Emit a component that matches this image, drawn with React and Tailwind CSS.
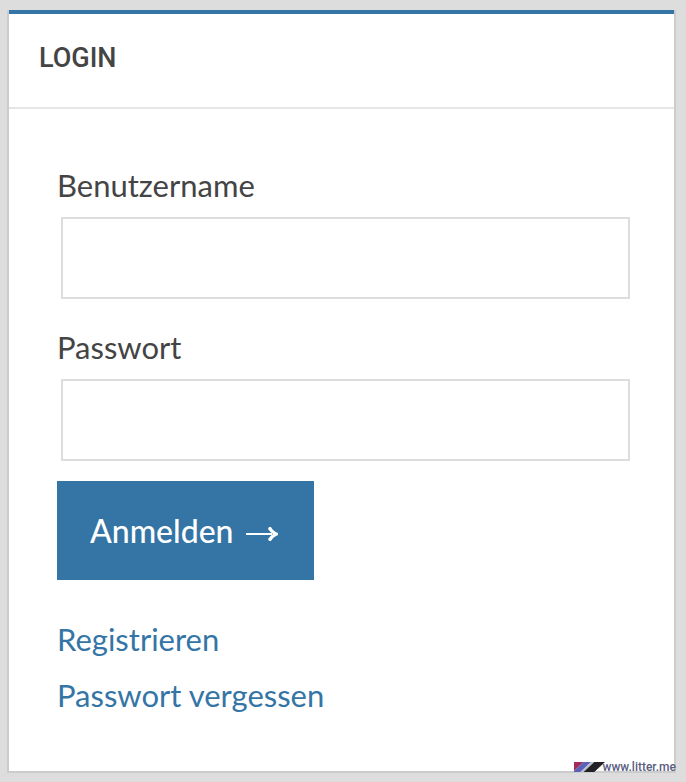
import React, { useState } from 'react';

const Field = ({ id, label, type, value, onChange }) => (
  <div className="mb-5">
    <label htmlFor={id} className="block text-[31px] leading-[56px] text-[#444444]">
      {label}
    </label>
    <div className="pt-1 pl-1">
      <input
        id={id}
        type={type}
        value={value}
        onChange={(e) => onChange(e.target.value)}
        className="block w-full h-[82px] px-4 text-[31px] text-[#444444] bg-white border-2 border-[#dddddd] outline-none focus:border-[#3475a6]"
      />
    </div>
  </div>
);

const LitterBadge = () => (
  <a
    href="#litter"
    className="absolute -right-0.5 -bottom-0.5 flex items-center h-3 font-['Roboto',sans-serif] text-xs leading-3 font-medium text-[#5b5d82]"
  >
    <svg width="31" height="10" viewBox="0 0 29 10" preserveAspectRatio="none" className="shrink-0" aria-hidden="true">
      <path d="M0 0h9L0 9z" fill="#a12c5c" />
      <path d="M9 0h7L6 10H0V9z" fill="#5a62b8" />
      <path d="M16 0h3L9 10H6z" fill="#b9bbd0" />
      <path d="M19 0h10L19 10H9z" fill="#222226" />
    </svg>
    <span className="-ml-0.5">www.litter.me</span>
  </a>
);

const App = () => {
  const [username, setUsername] = useState('');
  const [password, setPassword] = useState('');

  return (
    <div className="min-h-screen bg-[#dddddd] pt-2.5 pr-2.5 pb-2.5 pl-[7px] font-['Lato',sans-serif]">
      <main className="relative bg-white border-x-2 border-b-2 border-[#cccccc]">
        <header className="border-t-4 border-t-[#3475a6] border-b-2 border-b-[#e5e5e5] px-[30px] pt-[22px] pb-[26px]">
          <h1 className="font-['Roboto',sans-serif] text-[27px] leading-[45px] font-medium text-[#444444]">LOGIN</h1>
        </header>

        <div className="pt-12 pr-11 pb-12 pl-12">
          <form onSubmit={(e) => e.preventDefault()}>
            <Field id="username" label="Benutzername" type="text" value={username} onChange={setUsername} />
            <Field id="password" label="Passwort" type="password" value={password} onChange={setPassword} />
            <button
              type="submit"
              className="flex items-center gap-2.5 h-[99px] pl-[33px] pr-9 bg-[#3475a6] text-[32px] font-medium text-white cursor-pointer"
            >
              Anmelden
              <svg width="34" height="16" viewBox="0 0 34 16" className="mt-1.5" fill="currentColor" aria-hidden="true">
                <path d="M2 7h26v2H2z" />
                <path d="M25 1h2q2 4 7 6v2q-5 2-7 6h-2l-1-2q2-3 5-5q-3-2-5-5z" />
              </svg>
            </button>
          </form>

          <nav className="mt-[31px] flex flex-col items-start text-[31px] leading-[56px] text-[#3475a6]">
            <a href="#register" className="hover:underline">Registrieren</a>
            <a href="#lost-password" className="hover:underline">Passwort vergessen</a>
          </nav>
        </div>

        <LitterBadge />
      </main>
    </div>
  );
};

export default App;
